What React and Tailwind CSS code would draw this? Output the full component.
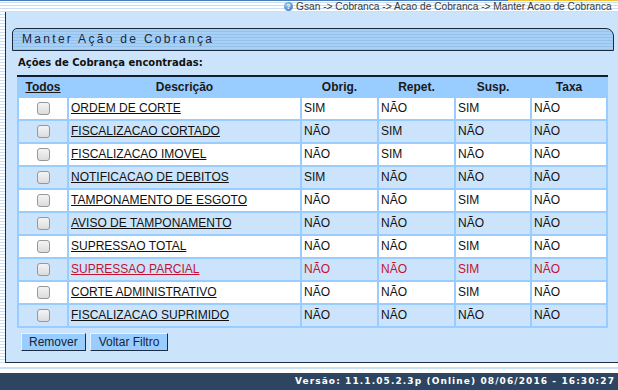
const rows = [
  { desc: 'ORDEM DE CORTE', obrig: 'SIM', repet: 'NÃO', susp: 'SIM', taxa: 'NÃO' },
  { desc: 'FISCALIZACAO CORTADO', obrig: 'NÃO', repet: 'SIM', susp: 'NÃO', taxa: 'NÃO' },
  { desc: 'FISCALIZACAO IMOVEL', obrig: 'NÃO', repet: 'SIM', susp: 'NÃO', taxa: 'NÃO' },
  { desc: 'NOTIFICACAO DE DEBITOS', obrig: 'SIM', repet: 'NÃO', susp: 'NÃO', taxa: 'NÃO' },
  { desc: 'TAMPONAMENTO DE ESGOTO', obrig: 'NÃO', repet: 'NÃO', susp: 'SIM', taxa: 'NÃO' },
  { desc: 'AVISO DE TAMPONAMENTO', obrig: 'NÃO', repet: 'NÃO', susp: 'NÃO', taxa: 'NÃO' },
  { desc: 'SUPRESSAO TOTAL', obrig: 'NÃO', repet: 'NÃO', susp: 'SIM', taxa: 'NÃO' },
  { desc: 'SUPRESSAO PARCIAL', obrig: 'NÃO', repet: 'NÃO', susp: 'SIM', taxa: 'NÃO', red: true },
  { desc: 'CORTE ADMINISTRATIVO', obrig: 'NÃO', repet: 'NÃO', susp: 'SIM', taxa: 'NÃO' },
  { desc: 'FISCALIZACAO SUPRIMIDO', obrig: 'NÃO', repet: 'NÃO', susp: 'NÃO', taxa: 'NÃO' },
];

const stripes =
  'bg-[repeating-linear-gradient(to_bottom,#ffffff_0px,#ffffff_2px,#c9dff3_2px,#c9dff3_3px)]';

const Checkbox = () => (
  <span className="inline-block w-[13px] h-[13px] align-middle rounded-[3px] border border-[#979797] bg-[linear-gradient(to_bottom,#f4f4f4,#dcdcdc)]" />
);

const App = () => {
  return (
    <div className="w-[618px] h-[390px] overflow-hidden bg-white font-['Liberation_Sans',Arial,sans-serif] text-[#111]">
      {/* top bar with breadcrumb */}
      <div className={`relative h-[12px] ${stripes}`}>
        <div className="flex h-[1px]">
          <div className="flex-1 bg-[#4c7cb6]" />
          <div className="w-[110px] bg-[#f2c23c]" />
        </div>
        <div className="flex items-center h-[11px] pl-[284px] whitespace-nowrap">
          <span className="flex items-center justify-center shrink-0 w-[9px] h-[9px] rounded-full bg-[radial-gradient(circle_at_35%_30%,#9cc8f0,#2f6fb8)] text-white text-[7px] font-bold leading-none mr-[3px]">
            ?
          </span>
          <span className="text-[10.2px] leading-[11px] text-[#3a3a3a]">
            Gsan -&gt; Cobranca -&gt; Acao de Cobranca -&gt; Manter Acao de Cobranca
          </span>
        </div>
      </div>

      {/* main area */}
      <div className="flex h-[351px]">
        <div className={`w-[5px] ${stripes}`} />
        <div className="flex-1 border-l border-b border-[#1d2f45] bg-[#cce4fb]">
          <div className="mt-[16px] ml-[6px] mr-[4px] h-[23px] border border-[#1b2a3d] rounded-tl-[5px] rounded-tr-[8px] bg-[repeating-linear-gradient(to_bottom,#a8d0f5_0px,#a8d0f5_2px,#92c3ef_2px,#92c3ef_3px)]">
            <span className="block pl-[9px] text-[12px] leading-[21px] tracking-[2.3px] text-[#1a2740]">
              Manter Ação de Cobrança
            </span>
          </div>

          <div className="mt-[6px] ml-[12px] text-[10px] leading-[12px] font-bold font-['DejaVu_Sans',Verdana,sans-serif] text-[#111]">
            Ações de Cobrança encontradas:
          </div>

          <table className="mt-[6px] ml-[11px] w-[591px] table-fixed border-separate border-spacing-[2px] bg-[#99ccff] border-t-2 border-t-[#0f1e30] text-[12px]">
            <thead>
              <tr className="font-bold text-[#1a1a1a]">
                <th className="w-[48px] h-[17px] p-0 text-center leading-[17px]">
                  <span className="underline">Todos</span>
                </th>
                <th className="w-[231px] p-0 text-center leading-[17px]">Descrição</th>
                <th className="w-[75px] p-0 text-center leading-[17px]">Obrig.</th>
                <th className="w-[75px] p-0 text-center leading-[17px]">Repet.</th>
                <th className="w-[74px] p-0 text-center leading-[17px]">Susp.</th>
                <th className="w-[74px] p-0 text-center leading-[17px]">Taxa</th>
              </tr>
            </thead>
            <tbody>
              {rows.map((r, i) => {
                const bg = i % 2 === 0 ? 'bg-white' : 'bg-[#cce4fb]';
                const color = r.red ? 'text-[#c41230]' : 'text-[#111]';
                return (
                  <tr key={r.desc} className={color}>
                    <td className={`${bg} h-[21px] p-0 text-center leading-none`}>
                      <Checkbox />
                    </td>
                    <td className={`${bg} p-0 px-[2px] leading-[21px]`}>
                      <a href="#" className="underline">{r.desc}</a>
                    </td>
                    <td className={`${bg} p-0 px-[2px] leading-[21px]`}>{r.obrig}</td>
                    <td className={`${bg} p-0 px-[2px] leading-[21px]`}>{r.repet}</td>
                    <td className={`${bg} p-0 px-[2px] leading-[21px]`}>{r.susp}</td>
                    <td className={`${bg} p-0 px-[2px] leading-[21px]`}>{r.taxa}</td>
                  </tr>
                );
              })}
            </tbody>
          </table>

          <div className="flex gap-[4px] mt-[5px] ml-[15px]">
            <button className="h-[18px] px-[7px] text-[12px] leading-[16px] text-[#14243a] bg-[#99ccff] border border-t-[#e6f2ff] border-l-[#e6f2ff] border-r-[#1c2d44] border-b-[#1c2d44]">
              Remover
            </button>
            <button className="h-[18px] px-[8px] text-[12px] leading-[16px] text-[#14243a] bg-[#99ccff] border border-t-[#e6f2ff] border-l-[#e6f2ff] border-r-[#1c2d44] border-b-[#1c2d44]">
              Voltar Filtro
            </button>
          </div>
        </div>
      </div>

      {/* bottom strip */}
      <div className="h-[10px] bg-[linear-gradient(to_bottom,#ffffff_0px,#ffffff_4px,#c9dff3_4px,#c9dff3_6px,#ffffff_6px)]" />

      {/* footer */}
      <div className="h-[17px] bg-[#2e4561] text-right pr-[3px] text-[9px] leading-[17px] font-bold tracking-[1.1px] text-white font-['DejaVu_Sans',Verdana,sans-serif] whitespace-nowrap">
        Versão: 11.1.05.2.3p (Online) 08/06/2016 - 16:30:27
      </div>
    </div>
  );
};

export default App;
